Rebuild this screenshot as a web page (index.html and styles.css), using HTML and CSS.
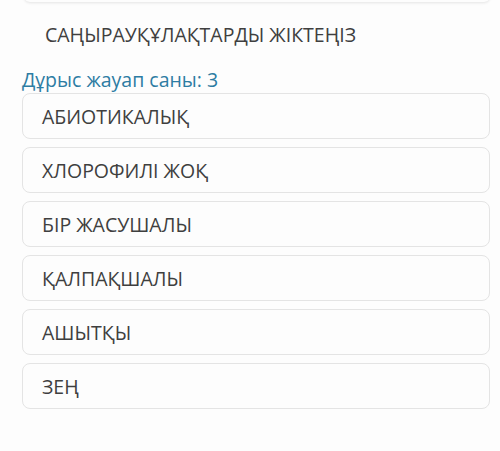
FILE: index.html
```html
<!DOCTYPE html>
<html lang="kk">
<head>
<meta charset="utf-8">
<link rel="stylesheet" href="styles.css">
</head>
<body>
<div class="page">
  <div class="prev-card"></div>
  <h2 class="question">САҢЫРАУҚҰЛАҚТАРДЫ ЖІКТЕҢІЗ</h2>
  <div class="hint">Дұрыс жауап саны: 3</div>
  <ul class="options">
    <li class="option">АБИОТИКАЛЫҚ</li>
    <li class="option">ХЛОРОФИЛІ ЖОҚ</li>
    <li class="option">БІР ЖАСУШАЛЫ</li>
    <li class="option">ҚАЛПАҚШАЛЫ</li>
    <li class="option">АШЫТҚЫ</li>
    <li class="option">ЗЕҢ</li>
  </ul>
</div>
</body>
</html>
```
FILE: styles.css
```css
html, body {
  margin: 0;
  padding: 0;
  background: #fdfdfd;
}
body {
  font-family: "Open Sans", "Noto Sans", sans-serif;
  color: #3f3f3f;
}
.page {
  width: 500px;
  height: 451px;
  overflow: hidden;
}
.prev-card {
  margin: -20px 10px 0 24px;
  height: 22px;
  background: #fdfdfd;
  border-radius: 0 0 6px 6px;
  box-shadow: 0 1px 3px rgba(0,0,0,0.10);
}
.question {
  margin: 0;
  padding: 19px 0 0 45px;
  font-size: 19.5px;
  font-weight: 400;
  line-height: 28px;
  color: #3f3f3f;
}
.hint {
  margin: 19px 0 0 22px;
  font-size: 19.5px;
  line-height: 24px;
  color: #2d7ca3;
}
.options {
  list-style: none;
  margin: 1px 10px 0 22px;
  padding: 0;
  display: flex;
  flex-direction: column;
  gap: 8px;
}
.option {
  height: 46px;
  box-sizing: border-box;
  border: 1px solid #e4e4e4;
  border-radius: 8px;
  background: #fdfdfd;
  padding: 0 0 0 19px;
  display: flex;
  align-items: center;
  font-size: 19.5px;
  color: #3f3f3f;
}
```
